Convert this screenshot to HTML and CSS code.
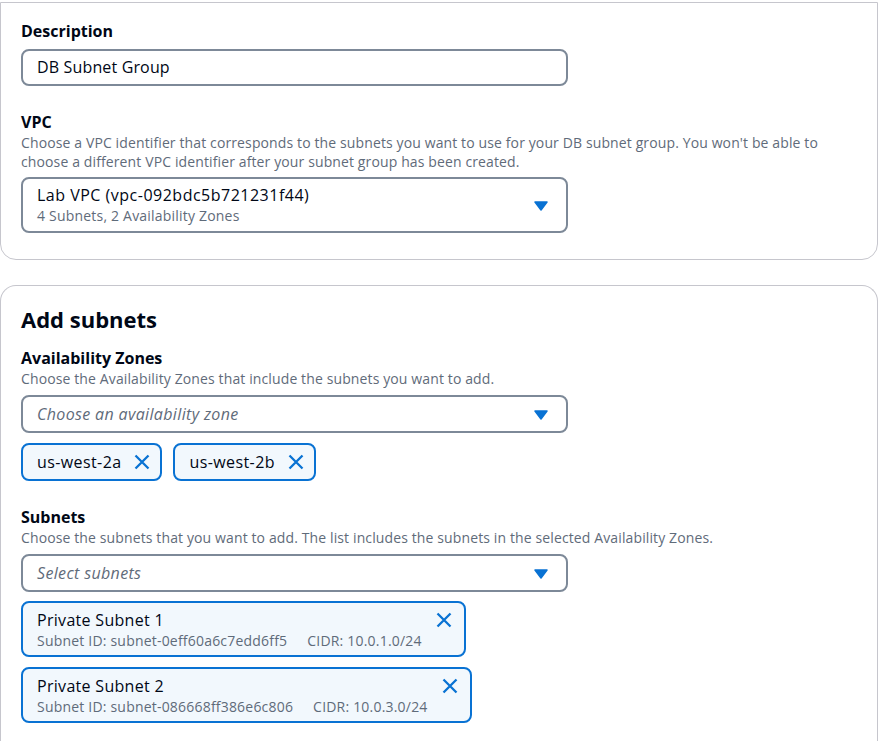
FILE: index.html
```html
<!DOCTYPE html>
<html lang="en">
<head>
<meta charset="utf-8">
<title>DB Subnet Group</title>
<link rel="stylesheet" href="styles.css">
</head>
<body>
<div class="page">
  <section class="card card-top">
    <div class="field">
      <div class="label">Description</div>
      <div class="input">DB Subnet Group</div>
    </div>
    <div class="field field-gap">
      <div class="label">VPC</div>
      <div class="help">Choose a VPC identifier that corresponds to the subnets you want to use for your DB subnet group. You won't be able to choose a different VPC identifier after your subnet group has been created.</div>
      <div class="select select-tall">
        <div class="select-text">
          <div class="value">Lab VPC (vpc-092bdc5b721231f44)</div>
          <div class="sub">4 Subnets, 2 Availability Zones</div>
        </div>
        <svg class="caret" width="14" height="10" viewBox="0 0 14 10"><path d="M1 1h12L7 9z" fill="#0972d3" stroke="#0972d3" stroke-linejoin="round" stroke-width="1.5"/></svg>
      </div>
    </div>
  </section>

  <section class="card card-bottom">
    <h2 class="heading">Add subnets</h2>
    <div class="field">
      <div class="label">Availability Zones</div>
      <div class="help">Choose the Availability Zones that include the subnets you want to add.</div>
      <div class="select">
        <div class="placeholder">Choose an availability zone</div>
        <svg class="caret" width="14" height="10" viewBox="0 0 14 10"><path d="M1 1h12L7 9z" fill="#0972d3" stroke="#0972d3" stroke-linejoin="round" stroke-width="1.5"/></svg>
      </div>
      <div class="tokens">
        <div class="token">
          <span class="token-text">us-west-2a</span>
          <svg class="x" width="16" height="16" viewBox="0 0 16 16"><path d="M1.5 1.5l13 13M14.5 1.5l-13 13" stroke="#0972d3" stroke-width="2.3" fill="none"/></svg>
        </div>
        <div class="token">
          <span class="token-text">us-west-2b</span>
          <svg class="x" width="16" height="16" viewBox="0 0 16 16"><path d="M1.5 1.5l13 13M14.5 1.5l-13 13" stroke="#0972d3" stroke-width="2.3" fill="none"/></svg>
        </div>
      </div>
    </div>
    <div class="field field-gap">
      <div class="label">Subnets</div>
      <div class="help">Choose the subnets that you want to add. The list includes the subnets in the selected Availability Zones.</div>
      <div class="select">
        <div class="placeholder">Select subnets</div>
        <svg class="caret" width="14" height="10" viewBox="0 0 14 10"><path d="M1 1h12L7 9z" fill="#0972d3" stroke="#0972d3" stroke-linejoin="round" stroke-width="1.5"/></svg>
      </div>
      <div class="subnet-list">
        <div class="subnet">
          <div class="subnet-text">
            <div class="value">Private Subnet 1</div>
            <div class="sub"><span class="sid">Subnet ID: subnet-0eff60a6c7edd6ff5</span><span>CIDR: 10.0.1.0/24</span></div>
          </div>
          <svg class="x" width="16" height="16" viewBox="0 0 16 16"><path d="M1.5 1.5l13 13M14.5 1.5l-13 13" stroke="#0972d3" stroke-width="2.3" fill="none"/></svg>
        </div>
        <div class="subnet">
          <div class="subnet-text">
            <div class="value">Private Subnet 2</div>
            <div class="sub"><span class="sid">Subnet ID: subnet-086668ff386e6c806</span><span>CIDR: 10.0.3.0/24</span></div>
          </div>
          <svg class="x" width="16" height="16" viewBox="0 0 16 16"><path d="M1.5 1.5l13 13M14.5 1.5l-13 13" stroke="#0972d3" stroke-width="2.3" fill="none"/></svg>
        </div>
      </div>
    </div>
  </section>
</div>
</body>
</html>
```

FILE: styles.css
```css
* { box-sizing: border-box; }
html, body { margin: 0; padding: 0; background: #ffffff; }
body {
  font-family: "Open Sans", "Noto Sans", sans-serif;
  color: #000716;
  font-size: 14px;
}
.page {
  width: 878px;
  padding-top: 2px;
}
.card {
  border: 1px solid #c6c6cd;
  border-radius: 16px;
  background: #fff;
  padding: 17px 20px 24px 20px;
}
.card-top {
  border-top-left-radius: 0;
  border-top-right-radius: 0;
  height: 258px;
}
.card-bottom {
  margin-top: 25px;
  padding-top: 18px;
  border-bottom-left-radius: 0;
  border-bottom-right-radius: 0;
  border-bottom: none;
  height: 460px;
}
.heading {
  margin: 0 0 13px 0;
  font-size: 22px;
  line-height: 30px;
  font-weight: 700;
}
.field { display: flex; flex-direction: column; align-items: flex-start; }
.field-gap { margin-top: 25px; }
.label {
  font-size: 16px;
  line-height: 22px;
  font-weight: 700;
}
.help {
  font-size: 14px;
  line-height: 19px;
  letter-spacing: 0.12px;
  color: #5f6b7a;
  margin-bottom: 7px;
}
.card-top .help { margin-bottom: 6px; }
.input {
  margin-top: 7px;
  width: 547px;
  height: 37px;
  border: 2px solid #7d8998;
  border-radius: 8px;
  padding: 0 14px;
  font-size: 16px;
  letter-spacing: 0.15px;
  line-height: 33px;
}
.select {
  width: 547px;
  height: 38px;
  border: 2px solid #7d8998;
  border-radius: 8px;
  padding: 0 18px 0 14px;
  display: flex;
  align-items: center;
  justify-content: space-between;
}
.select-tall { height: 56px; }
.select-text { display: flex; flex-direction: column; }
.value { font-size: 16px; line-height: 22px; letter-spacing: 0.3px; }
.select-tall .value { letter-spacing: 0.5px; }
.sub { font-size: 14px; line-height: 20px; color: #5f6b7a; letter-spacing: 0.2px; }
.placeholder { font-size: 16px; font-style: italic; color: #5f6b7a; letter-spacing: 0.35px; }
.caret { display: block; margin-top: 2px; }
.tokens {
  display: flex;
  gap: 11px;
  margin-top: 10px;
}
.token {
  height: 38px;
  border: 2px solid #0972d3;
  border-radius: 8px;
  background: #f2f8fd;
  display: flex;
  align-items: center;
  padding: 0 10px 0 14px;
  gap: 13px;
}
.token-text { font-size: 16px; letter-spacing: 0.4px; }
.x { display: block; }
.subnet-list {
  margin-top: 9px;
  display: flex;
  flex-direction: column;
  align-items: flex-start;
  gap: 10px;
}
.subnet {
  height: 56px;
  border: 2px solid #0972d3;
  border-radius: 8px;
  background: #f2f8fd;
  display: flex;
  align-items: flex-start;
  padding: 6px 12px 5px 14px;
  gap: 14px;
}
.subnet .x { margin-top: 3px; }
.subnet .sub { display: flex; gap: 20px; }
```
